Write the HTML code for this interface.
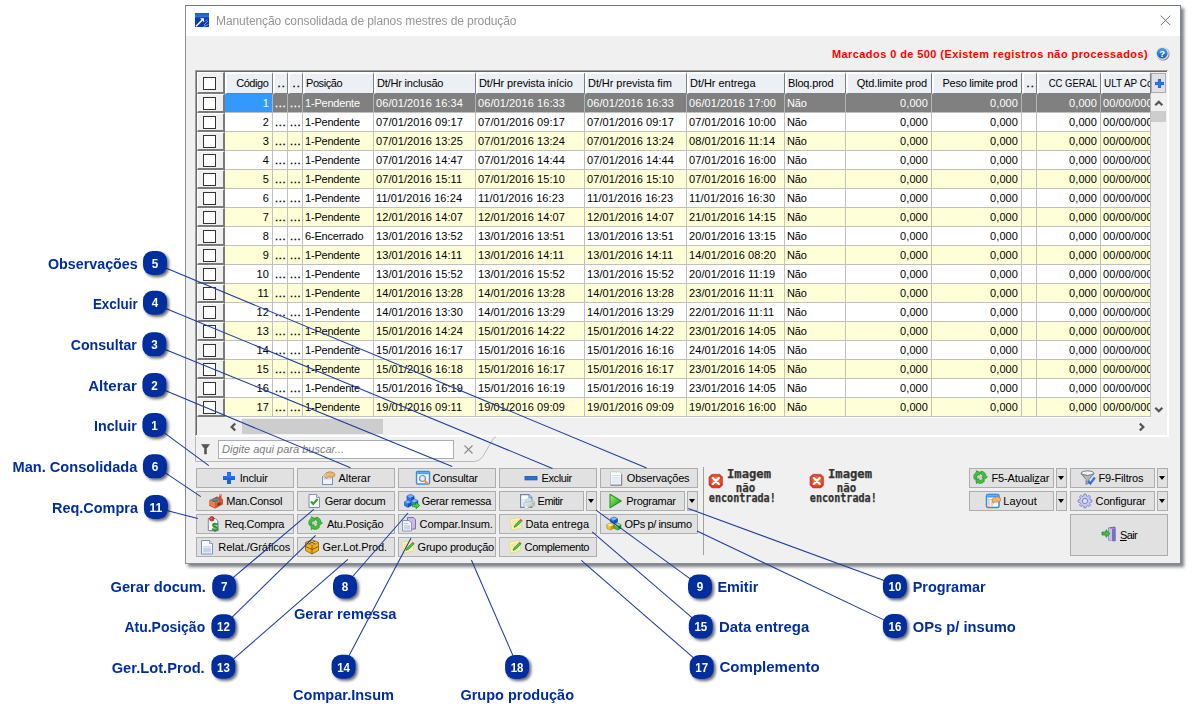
<!DOCTYPE html>
<html lang="pt-BR"><head><meta charset="utf-8"><title>Manutenção consolidada de planos mestres de produção</title>
<style>
html,body{margin:0;padding:0;background:#fff;}
body{width:1204px;height:721px;position:relative;overflow:hidden;font-family:"Liberation Sans",sans-serif;font-size:11px;color:#000;}
.abs,.abs *{position:absolute;box-sizing:border-box;}
#win{left:185px;top:5px;width:996px;height:559px;background:#f0f0f0;border:1px solid #6e7a8a;border-left-color:#8a9099;border-right-color:#80868f;border-bottom-color:#888c92;box-shadow:3px 3px 3px rgba(40,45,55,.6);}
#tbar{left:0;top:0;width:994px;height:30px;background:#fff;}
#title{left:30px;top:8px;font-size:12px;line-height:14px;color:#959595;white-space:nowrap;letter-spacing:-.085px;will-change:transform;}
.t{white-space:nowrap;line-height:13px;height:13px;letter-spacing:-.2px;}
.d{letter-spacing:.08px}
.t u{position:static;text-decoration:underline}
.dots{letter-spacing:.75px;-webkit-text-stroke:.35px currentColor}
#grid{left:195px;top:70px;width:974px;height:367px;background:#f0f0f0;border-left:1px solid #a0a0a0;border-top:1px solid #a0a0a0;border-right:2px solid #fff;border-bottom:2px solid #fff;box-shadow:inset 1px 1px 0 #696969;}
.hc{top:72px;height:22px;background:#eceff3;border-right:1px solid #7e7e7e;border-bottom:1px solid #7e7e7e;border-left:2px solid #fff;border-top:2px solid #fff;}
.hc .t{top:3px;}
.cell{height:19px;border-right:1px solid #c0c0c0;border-bottom:1px solid #c0c0c0;overflow:hidden;}
.cell .t{top:3px;}
.w{background:#fff}.y{background:#ffffd7}.s{background:#808080;color:#fff;border-color:#808080 #b4b4b4 #c0c0c0 #808080}
.ck{height:19px;background:#f0f0f0;border-right:2px solid #7a7a7a;border-bottom:2px solid #7a7a7a;border-left:1px solid #fff;border-top:1px solid #fff;}
.cb{left:5px;top:2px;width:13px;height:13px;background:#fff;border:1px solid #333;}
.btn{height:20px;background:#e1e1e1;border:1px solid #adadad;}
.btn .t{top:3px;}
.btn svg{top:1px}
.dd{width:11px;height:20px;background:#e1e1e1;border:1px solid #adadad;}
.dd:after{content:"";position:absolute;left:1px;top:7px;border:3.5px solid transparent;border-top:4px solid #000;border-bottom:0;}
</style></head><body>
<div class="abs" id="win">
<div id="tbar"></div>
<svg style="left:9px;top:7px" width="14" height="14" viewBox="0 0 14 14"><defs><linearGradient id="ag" x1="0" y1="0" x2="0" y2="1"><stop offset="0" stop-color="#1a54d0"/><stop offset=".28" stop-color="#3274e0"/><stop offset=".34" stop-color="#0a3aa8"/><stop offset="1" stop-color="#0a3cb0"/></linearGradient></defs><rect width="14" height="14" fill="url(#ag)"/><path d="M1 13.300 L7.500 6.800" stroke="#fff" stroke-width="1.500"/><path d="M5 5.200 L9 5.200 L9 9.200 Z" fill="#fff"/><path d="M10 8.500 l2.500 -2.500 M9 12 l4 -4 M8.500 13.500 l5 -2" stroke="#9ab8f0" stroke-width="1" opacity=".8"/></svg>
<div id="title">Manutenção consolidada de planos mestres de produção</div>
<svg style="left:973px;top:8px" width="13" height="13" viewBox="0 0 13 13"><path d="M1.5 1.5 L11.5 11.5 M11.5 1.5 L1.5 11.5" transform="translate(.4 .2) scale(.95)" stroke="#6a6a6a" stroke-width="1" fill="none"/></svg>
</div>

<div class="abs" id="page">
<div class="t" style="left:832px;top:48px;font-weight:bold;color:#ff0000;letter-spacing:0.414px">Marcados 0 de 500 (Existem registros não processados)</div>
<svg style="left:1154px;top:45px" width="17" height="17" viewBox="0 0 17 17"><defs><linearGradient id="hg" x1="0" y1="0" x2="0" y2="1"><stop offset="0" stop-color="#58a4f0"/><stop offset=".55" stop-color="#2e7cdc"/><stop offset="1" stop-color="#1858b8"/></linearGradient></defs><circle cx="9" cy="9" r="6.600" fill="#6a6a6a" opacity=".75"/><circle cx="8.200" cy="8.200" r="6.500" fill="#ece6de"/><circle cx="8.200" cy="8.200" r="5.400" fill="url(#hg)"/><text x="8.200" y="11.600" font-size="9.500" font-weight="bold" fill="#fff" text-anchor="middle" font-family="Liberation Sans, sans-serif">?</text></svg>
<div id="grid"></div>
<div class="hc" style="left:197px;width:28px;border-left-width:1px;border-top-width:1px;border-right:2px solid #7a7a7a;border-bottom:2px solid #7a7a7a;background:#f0f0f0"><div class="cb" style="left:5px;top:4px"></div></div>
<div class="hc" style="left:225px;width:48px"><div class="t" style="right:3.57px;letter-spacing:-0.427px">Código</div></div>
<div class="hc" style="left:273px;width:15px;overflow:hidden"><div class="t" style="left:1px;letter-spacing:0.900px;-webkit-text-stroke:.35px #000;left:2.500px;letter-spacing:1.300px">...</div></div>
<div class="hc" style="left:288px;width:15px;overflow:hidden"><div class="t" style="left:1px;letter-spacing:0.900px;-webkit-text-stroke:.35px #000;left:2.500px;letter-spacing:1.300px">...</div></div>
<div class="hc" style="left:303px;width:71px;overflow:hidden"><div class="t" style="left:1px;letter-spacing:-0.419px;">Posição</div></div>
<div class="hc" style="left:374px;width:102px;overflow:hidden"><div class="t" style="left:1px;letter-spacing:-0.199px;">Dt/Hr inclusão</div></div>
<div class="hc" style="left:476px;width:109px;overflow:hidden"><div class="t" style="left:1px;letter-spacing:-0.108px;">Dt/Hr prevista início</div></div>
<div class="hc" style="left:585px;width:102px;overflow:hidden"><div class="t" style="left:1px;letter-spacing:-0.064px;">Dt/Hr prevista fim</div></div>
<div class="hc" style="left:687px;width:98px;overflow:hidden"><div class="t" style="left:1px;letter-spacing:-0.041px;">Dt/Hr entrega</div></div>
<div class="hc" style="left:785px;width:61px;overflow:hidden"><div class="t" style="left:1px;letter-spacing:-0.177px;">Bloq.prod</div></div>
<div class="hc" style="left:846px;width:86px"><div class="t" style="right:3.92px;letter-spacing:-0.082px">Qtd.limite prod</div></div>
<div class="hc" style="left:932px;width:90px"><div class="t" style="right:3.75px;letter-spacing:-0.254px">Peso limite prod</div></div>
<div class="hc" style="left:1022px;width:15px;overflow:hidden"><div class="t" style="left:1px;letter-spacing:0.900px;-webkit-text-stroke:.35px #000;left:2.500px;letter-spacing:1.300px">...</div></div>
<div class="hc" style="left:1037px;width:64px"><div class="t" style="right:3px;letter-spacing:0;transform:scaleX(.862);transform-origin:100% 50%">CC GERAL</div></div>
<div class="hc" style="left:1101px;width:50px;overflow:hidden"><div class="t" style="left:1px;letter-spacing:0;transform:scaleX(.9);transform-origin:0 50%">ULT AP Co</div></div>
<div style="left:1151px;top:72px;width:16px;height:22px;background:#f0f0f0"></div>
<div class="btn" style="left:1151px;top:73px;width:15px;height:20px"><svg style="left:3px;top:5px" width="9" height="9" viewBox="0 0 9 9"><path d="M3 0h3v3h3v3h-3v3h-3v-3h-3v-3h3z" fill="#2a78e4"/><path d="M3.400 .4h2.200v3h3v2.200h-3v3h-2.200v-3h-3v-2.200h3z" fill="none" stroke="#1858c0" stroke-width=".6" opacity=".7"/></svg></div>
<div class="ck" style="left:197px;top:94px;width:28px"><div class="cb"></div></div>
<div class="cell s" style="left:225px;top:94px;width:48px;background:#3399ff;border-color:#3399ff #b4b4b4 #c0c0c0 #3399ff;"><div class="t d" style="right:3px">1</div></div>
<div class="cell s" style="left:273px;top:94px;width:15px;"><div class="t dots" style="left:2px">...</div></div>
<div class="cell s" style="left:288px;top:94px;width:15px;"><div class="t dots" style="left:2px">...</div></div>
<div class="cell s" style="left:303px;top:94px;width:71px;"><div class="t" style="left:2px">1-Pendente</div></div>
<div class="cell s" style="left:374px;top:94px;width:102px;"><div class="t d" style="left:2px">06/01/2016 16:34</div></div>
<div class="cell s" style="left:476px;top:94px;width:109px;"><div class="t d" style="left:2px">06/01/2016 16:33</div></div>
<div class="cell s" style="left:585px;top:94px;width:102px;"><div class="t d" style="left:2px">06/01/2016 16:33</div></div>
<div class="cell s" style="left:687px;top:94px;width:98px;"><div class="t d" style="left:2px">06/01/2016 17:00</div></div>
<div class="cell s" style="left:785px;top:94px;width:61px;"><div class="t" style="left:2px">Não</div></div>
<div class="cell s" style="left:846px;top:94px;width:86px;"><div class="t d" style="right:3px">0,000</div></div>
<div class="cell s" style="left:932px;top:94px;width:90px;"><div class="t d" style="right:3px">0,000</div></div>
<div class="cell s" style="left:1022px;top:94px;width:15px;"><div class="t" style="left:2px"></div></div>
<div class="cell s" style="left:1037px;top:94px;width:64px;"><div class="t d" style="right:3px">0,000</div></div>
<div class="cell s" style="left:1101px;top:94px;width:50px;"><div class="t d" style="left:2px">00/00/0000</div></div>
<div class="ck" style="left:197px;top:113px;width:28px"><div class="cb"></div></div>
<div class="cell w" style="left:225px;top:113px;width:48px;"><div class="t d" style="right:3px">2</div></div>
<div class="cell w" style="left:273px;top:113px;width:15px;"><div class="t dots" style="left:2px">...</div></div>
<div class="cell w" style="left:288px;top:113px;width:15px;"><div class="t dots" style="left:2px">...</div></div>
<div class="cell w" style="left:303px;top:113px;width:71px;"><div class="t" style="left:2px">1-Pendente</div></div>
<div class="cell w" style="left:374px;top:113px;width:102px;"><div class="t d" style="left:2px">07/01/2016 09:17</div></div>
<div class="cell w" style="left:476px;top:113px;width:109px;"><div class="t d" style="left:2px">07/01/2016 09:17</div></div>
<div class="cell w" style="left:585px;top:113px;width:102px;"><div class="t d" style="left:2px">07/01/2016 09:17</div></div>
<div class="cell w" style="left:687px;top:113px;width:98px;"><div class="t d" style="left:2px">07/01/2016 10:00</div></div>
<div class="cell w" style="left:785px;top:113px;width:61px;"><div class="t" style="left:2px">Não</div></div>
<div class="cell w" style="left:846px;top:113px;width:86px;"><div class="t d" style="right:3px">0,000</div></div>
<div class="cell w" style="left:932px;top:113px;width:90px;"><div class="t d" style="right:3px">0,000</div></div>
<div class="cell w" style="left:1022px;top:113px;width:15px;"><div class="t" style="left:2px"></div></div>
<div class="cell w" style="left:1037px;top:113px;width:64px;"><div class="t d" style="right:3px">0,000</div></div>
<div class="cell w" style="left:1101px;top:113px;width:50px;"><div class="t d" style="left:2px">00/00/0000</div></div>
<div class="ck" style="left:197px;top:132px;width:28px"><div class="cb"></div></div>
<div class="cell y" style="left:225px;top:132px;width:48px;"><div class="t d" style="right:3px">3</div></div>
<div class="cell y" style="left:273px;top:132px;width:15px;"><div class="t dots" style="left:2px">...</div></div>
<div class="cell y" style="left:288px;top:132px;width:15px;"><div class="t dots" style="left:2px">...</div></div>
<div class="cell y" style="left:303px;top:132px;width:71px;"><div class="t" style="left:2px">1-Pendente</div></div>
<div class="cell y" style="left:374px;top:132px;width:102px;"><div class="t d" style="left:2px">07/01/2016 13:25</div></div>
<div class="cell y" style="left:476px;top:132px;width:109px;"><div class="t d" style="left:2px">07/01/2016 13:24</div></div>
<div class="cell y" style="left:585px;top:132px;width:102px;"><div class="t d" style="left:2px">07/01/2016 13:24</div></div>
<div class="cell y" style="left:687px;top:132px;width:98px;"><div class="t d" style="left:2px">08/01/2016 11:14</div></div>
<div class="cell y" style="left:785px;top:132px;width:61px;"><div class="t" style="left:2px">Não</div></div>
<div class="cell y" style="left:846px;top:132px;width:86px;"><div class="t d" style="right:3px">0,000</div></div>
<div class="cell y" style="left:932px;top:132px;width:90px;"><div class="t d" style="right:3px">0,000</div></div>
<div class="cell y" style="left:1022px;top:132px;width:15px;"><div class="t" style="left:2px"></div></div>
<div class="cell y" style="left:1037px;top:132px;width:64px;"><div class="t d" style="right:3px">0,000</div></div>
<div class="cell y" style="left:1101px;top:132px;width:50px;"><div class="t d" style="left:2px">00/00/0000</div></div>
<div class="ck" style="left:197px;top:151px;width:28px"><div class="cb"></div></div>
<div class="cell w" style="left:225px;top:151px;width:48px;"><div class="t d" style="right:3px">4</div></div>
<div class="cell w" style="left:273px;top:151px;width:15px;"><div class="t dots" style="left:2px">...</div></div>
<div class="cell w" style="left:288px;top:151px;width:15px;"><div class="t dots" style="left:2px">...</div></div>
<div class="cell w" style="left:303px;top:151px;width:71px;"><div class="t" style="left:2px">1-Pendente</div></div>
<div class="cell w" style="left:374px;top:151px;width:102px;"><div class="t d" style="left:2px">07/01/2016 14:47</div></div>
<div class="cell w" style="left:476px;top:151px;width:109px;"><div class="t d" style="left:2px">07/01/2016 14:44</div></div>
<div class="cell w" style="left:585px;top:151px;width:102px;"><div class="t d" style="left:2px">07/01/2016 14:44</div></div>
<div class="cell w" style="left:687px;top:151px;width:98px;"><div class="t d" style="left:2px">07/01/2016 16:00</div></div>
<div class="cell w" style="left:785px;top:151px;width:61px;"><div class="t" style="left:2px">Não</div></div>
<div class="cell w" style="left:846px;top:151px;width:86px;"><div class="t d" style="right:3px">0,000</div></div>
<div class="cell w" style="left:932px;top:151px;width:90px;"><div class="t d" style="right:3px">0,000</div></div>
<div class="cell w" style="left:1022px;top:151px;width:15px;"><div class="t" style="left:2px"></div></div>
<div class="cell w" style="left:1037px;top:151px;width:64px;"><div class="t d" style="right:3px">0,000</div></div>
<div class="cell w" style="left:1101px;top:151px;width:50px;"><div class="t d" style="left:2px">00/00/0000</div></div>
<div class="ck" style="left:197px;top:170px;width:28px"><div class="cb"></div></div>
<div class="cell y" style="left:225px;top:170px;width:48px;"><div class="t d" style="right:3px">5</div></div>
<div class="cell y" style="left:273px;top:170px;width:15px;"><div class="t dots" style="left:2px">...</div></div>
<div class="cell y" style="left:288px;top:170px;width:15px;"><div class="t dots" style="left:2px">...</div></div>
<div class="cell y" style="left:303px;top:170px;width:71px;"><div class="t" style="left:2px">1-Pendente</div></div>
<div class="cell y" style="left:374px;top:170px;width:102px;"><div class="t d" style="left:2px">07/01/2016 15:11</div></div>
<div class="cell y" style="left:476px;top:170px;width:109px;"><div class="t d" style="left:2px">07/01/2016 15:10</div></div>
<div class="cell y" style="left:585px;top:170px;width:102px;"><div class="t d" style="left:2px">07/01/2016 15:10</div></div>
<div class="cell y" style="left:687px;top:170px;width:98px;"><div class="t d" style="left:2px">07/01/2016 16:00</div></div>
<div class="cell y" style="left:785px;top:170px;width:61px;"><div class="t" style="left:2px">Não</div></div>
<div class="cell y" style="left:846px;top:170px;width:86px;"><div class="t d" style="right:3px">0,000</div></div>
<div class="cell y" style="left:932px;top:170px;width:90px;"><div class="t d" style="right:3px">0,000</div></div>
<div class="cell y" style="left:1022px;top:170px;width:15px;"><div class="t" style="left:2px"></div></div>
<div class="cell y" style="left:1037px;top:170px;width:64px;"><div class="t d" style="right:3px">0,000</div></div>
<div class="cell y" style="left:1101px;top:170px;width:50px;"><div class="t d" style="left:2px">00/00/0000</div></div>
<div class="ck" style="left:197px;top:189px;width:28px"><div class="cb"></div></div>
<div class="cell w" style="left:225px;top:189px;width:48px;"><div class="t d" style="right:3px">6</div></div>
<div class="cell w" style="left:273px;top:189px;width:15px;"><div class="t dots" style="left:2px">...</div></div>
<div class="cell w" style="left:288px;top:189px;width:15px;"><div class="t dots" style="left:2px">...</div></div>
<div class="cell w" style="left:303px;top:189px;width:71px;"><div class="t" style="left:2px">1-Pendente</div></div>
<div class="cell w" style="left:374px;top:189px;width:102px;"><div class="t d" style="left:2px">11/01/2016 16:24</div></div>
<div class="cell w" style="left:476px;top:189px;width:109px;"><div class="t d" style="left:2px">11/01/2016 16:23</div></div>
<div class="cell w" style="left:585px;top:189px;width:102px;"><div class="t d" style="left:2px">11/01/2016 16:23</div></div>
<div class="cell w" style="left:687px;top:189px;width:98px;"><div class="t d" style="left:2px">11/01/2016 16:30</div></div>
<div class="cell w" style="left:785px;top:189px;width:61px;"><div class="t" style="left:2px">Não</div></div>
<div class="cell w" style="left:846px;top:189px;width:86px;"><div class="t d" style="right:3px">0,000</div></div>
<div class="cell w" style="left:932px;top:189px;width:90px;"><div class="t d" style="right:3px">0,000</div></div>
<div class="cell w" style="left:1022px;top:189px;width:15px;"><div class="t" style="left:2px"></div></div>
<div class="cell w" style="left:1037px;top:189px;width:64px;"><div class="t d" style="right:3px">0,000</div></div>
<div class="cell w" style="left:1101px;top:189px;width:50px;"><div class="t d" style="left:2px">00/00/0000</div></div>
<div class="ck" style="left:197px;top:208px;width:28px"><div class="cb"></div></div>
<div class="cell y" style="left:225px;top:208px;width:48px;"><div class="t d" style="right:3px">7</div></div>
<div class="cell y" style="left:273px;top:208px;width:15px;"><div class="t dots" style="left:2px">...</div></div>
<div class="cell y" style="left:288px;top:208px;width:15px;"><div class="t dots" style="left:2px">...</div></div>
<div class="cell y" style="left:303px;top:208px;width:71px;"><div class="t" style="left:2px">1-Pendente</div></div>
<div class="cell y" style="left:374px;top:208px;width:102px;"><div class="t d" style="left:2px">12/01/2016 14:07</div></div>
<div class="cell y" style="left:476px;top:208px;width:109px;"><div class="t d" style="left:2px">12/01/2016 14:07</div></div>
<div class="cell y" style="left:585px;top:208px;width:102px;"><div class="t d" style="left:2px">12/01/2016 14:07</div></div>
<div class="cell y" style="left:687px;top:208px;width:98px;"><div class="t d" style="left:2px">21/01/2016 14:15</div></div>
<div class="cell y" style="left:785px;top:208px;width:61px;"><div class="t" style="left:2px">Não</div></div>
<div class="cell y" style="left:846px;top:208px;width:86px;"><div class="t d" style="right:3px">0,000</div></div>
<div class="cell y" style="left:932px;top:208px;width:90px;"><div class="t d" style="right:3px">0,000</div></div>
<div class="cell y" style="left:1022px;top:208px;width:15px;"><div class="t" style="left:2px"></div></div>
<div class="cell y" style="left:1037px;top:208px;width:64px;"><div class="t d" style="right:3px">0,000</div></div>
<div class="cell y" style="left:1101px;top:208px;width:50px;"><div class="t d" style="left:2px">00/00/0000</div></div>
<div class="ck" style="left:197px;top:227px;width:28px"><div class="cb"></div></div>
<div class="cell w" style="left:225px;top:227px;width:48px;"><div class="t d" style="right:3px">8</div></div>
<div class="cell w" style="left:273px;top:227px;width:15px;"><div class="t dots" style="left:2px">...</div></div>
<div class="cell w" style="left:288px;top:227px;width:15px;"><div class="t dots" style="left:2px">...</div></div>
<div class="cell w" style="left:303px;top:227px;width:71px;"><div class="t" style="left:2px">6-Encerrado</div></div>
<div class="cell w" style="left:374px;top:227px;width:102px;"><div class="t d" style="left:2px">13/01/2016 13:52</div></div>
<div class="cell w" style="left:476px;top:227px;width:109px;"><div class="t d" style="left:2px">13/01/2016 13:51</div></div>
<div class="cell w" style="left:585px;top:227px;width:102px;"><div class="t d" style="left:2px">13/01/2016 13:51</div></div>
<div class="cell w" style="left:687px;top:227px;width:98px;"><div class="t d" style="left:2px">20/01/2016 13:15</div></div>
<div class="cell w" style="left:785px;top:227px;width:61px;"><div class="t" style="left:2px">Não</div></div>
<div class="cell w" style="left:846px;top:227px;width:86px;"><div class="t d" style="right:3px">0,000</div></div>
<div class="cell w" style="left:932px;top:227px;width:90px;"><div class="t d" style="right:3px">0,000</div></div>
<div class="cell w" style="left:1022px;top:227px;width:15px;"><div class="t" style="left:2px"></div></div>
<div class="cell w" style="left:1037px;top:227px;width:64px;"><div class="t d" style="right:3px">0,000</div></div>
<div class="cell w" style="left:1101px;top:227px;width:50px;"><div class="t d" style="left:2px">00/00/0000</div></div>
<div class="ck" style="left:197px;top:246px;width:28px"><div class="cb"></div></div>
<div class="cell y" style="left:225px;top:246px;width:48px;"><div class="t d" style="right:3px">9</div></div>
<div class="cell y" style="left:273px;top:246px;width:15px;"><div class="t dots" style="left:2px">...</div></div>
<div class="cell y" style="left:288px;top:246px;width:15px;"><div class="t dots" style="left:2px">...</div></div>
<div class="cell y" style="left:303px;top:246px;width:71px;"><div class="t" style="left:2px">1-Pendente</div></div>
<div class="cell y" style="left:374px;top:246px;width:102px;"><div class="t d" style="left:2px">13/01/2016 14:11</div></div>
<div class="cell y" style="left:476px;top:246px;width:109px;"><div class="t d" style="left:2px">13/01/2016 14:11</div></div>
<div class="cell y" style="left:585px;top:246px;width:102px;"><div class="t d" style="left:2px">13/01/2016 14:11</div></div>
<div class="cell y" style="left:687px;top:246px;width:98px;"><div class="t d" style="left:2px">14/01/2016 08:20</div></div>
<div class="cell y" style="left:785px;top:246px;width:61px;"><div class="t" style="left:2px">Não</div></div>
<div class="cell y" style="left:846px;top:246px;width:86px;"><div class="t d" style="right:3px">0,000</div></div>
<div class="cell y" style="left:932px;top:246px;width:90px;"><div class="t d" style="right:3px">0,000</div></div>
<div class="cell y" style="left:1022px;top:246px;width:15px;"><div class="t" style="left:2px"></div></div>
<div class="cell y" style="left:1037px;top:246px;width:64px;"><div class="t d" style="right:3px">0,000</div></div>
<div class="cell y" style="left:1101px;top:246px;width:50px;"><div class="t d" style="left:2px">00/00/0000</div></div>
<div class="ck" style="left:197px;top:265px;width:28px"><div class="cb"></div></div>
<div class="cell w" style="left:225px;top:265px;width:48px;"><div class="t d" style="right:3px">10</div></div>
<div class="cell w" style="left:273px;top:265px;width:15px;"><div class="t dots" style="left:2px">...</div></div>
<div class="cell w" style="left:288px;top:265px;width:15px;"><div class="t dots" style="left:2px">...</div></div>
<div class="cell w" style="left:303px;top:265px;width:71px;"><div class="t" style="left:2px">1-Pendente</div></div>
<div class="cell w" style="left:374px;top:265px;width:102px;"><div class="t d" style="left:2px">13/01/2016 15:52</div></div>
<div class="cell w" style="left:476px;top:265px;width:109px;"><div class="t d" style="left:2px">13/01/2016 15:52</div></div>
<div class="cell w" style="left:585px;top:265px;width:102px;"><div class="t d" style="left:2px">13/01/2016 15:52</div></div>
<div class="cell w" style="left:687px;top:265px;width:98px;"><div class="t d" style="left:2px">20/01/2016 11:19</div></div>
<div class="cell w" style="left:785px;top:265px;width:61px;"><div class="t" style="left:2px">Não</div></div>
<div class="cell w" style="left:846px;top:265px;width:86px;"><div class="t d" style="right:3px">0,000</div></div>
<div class="cell w" style="left:932px;top:265px;width:90px;"><div class="t d" style="right:3px">0,000</div></div>
<div class="cell w" style="left:1022px;top:265px;width:15px;"><div class="t" style="left:2px"></div></div>
<div class="cell w" style="left:1037px;top:265px;width:64px;"><div class="t d" style="right:3px">0,000</div></div>
<div class="cell w" style="left:1101px;top:265px;width:50px;"><div class="t d" style="left:2px">00/00/0000</div></div>
<div class="ck" style="left:197px;top:284px;width:28px"><div class="cb"></div></div>
<div class="cell y" style="left:225px;top:284px;width:48px;"><div class="t d" style="right:3px">11</div></div>
<div class="cell y" style="left:273px;top:284px;width:15px;"><div class="t dots" style="left:2px">...</div></div>
<div class="cell y" style="left:288px;top:284px;width:15px;"><div class="t dots" style="left:2px">...</div></div>
<div class="cell y" style="left:303px;top:284px;width:71px;"><div class="t" style="left:2px">1-Pendente</div></div>
<div class="cell y" style="left:374px;top:284px;width:102px;"><div class="t d" style="left:2px">14/01/2016 13:28</div></div>
<div class="cell y" style="left:476px;top:284px;width:109px;"><div class="t d" style="left:2px">14/01/2016 13:28</div></div>
<div class="cell y" style="left:585px;top:284px;width:102px;"><div class="t d" style="left:2px">14/01/2016 13:28</div></div>
<div class="cell y" style="left:687px;top:284px;width:98px;"><div class="t d" style="left:2px">23/01/2016 11:11</div></div>
<div class="cell y" style="left:785px;top:284px;width:61px;"><div class="t" style="left:2px">Não</div></div>
<div class="cell y" style="left:846px;top:284px;width:86px;"><div class="t d" style="right:3px">0,000</div></div>
<div class="cell y" style="left:932px;top:284px;width:90px;"><div class="t d" style="right:3px">0,000</div></div>
<div class="cell y" style="left:1022px;top:284px;width:15px;"><div class="t" style="left:2px"></div></div>
<div class="cell y" style="left:1037px;top:284px;width:64px;"><div class="t d" style="right:3px">0,000</div></div>
<div class="cell y" style="left:1101px;top:284px;width:50px;"><div class="t d" style="left:2px">00/00/0000</div></div>
<div class="ck" style="left:197px;top:303px;width:28px"><div class="cb"></div></div>
<div class="cell w" style="left:225px;top:303px;width:48px;"><div class="t d" style="right:3px">12</div></div>
<div class="cell w" style="left:273px;top:303px;width:15px;"><div class="t dots" style="left:2px">...</div></div>
<div class="cell w" style="left:288px;top:303px;width:15px;"><div class="t dots" style="left:2px">...</div></div>
<div class="cell w" style="left:303px;top:303px;width:71px;"><div class="t" style="left:2px">1-Pendente</div></div>
<div class="cell w" style="left:374px;top:303px;width:102px;"><div class="t d" style="left:2px">14/01/2016 13:30</div></div>
<div class="cell w" style="left:476px;top:303px;width:109px;"><div class="t d" style="left:2px">14/01/2016 13:29</div></div>
<div class="cell w" style="left:585px;top:303px;width:102px;"><div class="t d" style="left:2px">14/01/2016 13:29</div></div>
<div class="cell w" style="left:687px;top:303px;width:98px;"><div class="t d" style="left:2px">22/01/2016 11:11</div></div>
<div class="cell w" style="left:785px;top:303px;width:61px;"><div class="t" style="left:2px">Não</div></div>
<div class="cell w" style="left:846px;top:303px;width:86px;"><div class="t d" style="right:3px">0,000</div></div>
<div class="cell w" style="left:932px;top:303px;width:90px;"><div class="t d" style="right:3px">0,000</div></div>
<div class="cell w" style="left:1022px;top:303px;width:15px;"><div class="t" style="left:2px"></div></div>
<div class="cell w" style="left:1037px;top:303px;width:64px;"><div class="t d" style="right:3px">0,000</div></div>
<div class="cell w" style="left:1101px;top:303px;width:50px;"><div class="t d" style="left:2px">00/00/0000</div></div>
<div class="ck" style="left:197px;top:322px;width:28px"><div class="cb"></div></div>
<div class="cell y" style="left:225px;top:322px;width:48px;"><div class="t d" style="right:3px">13</div></div>
<div class="cell y" style="left:273px;top:322px;width:15px;"><div class="t dots" style="left:2px">...</div></div>
<div class="cell y" style="left:288px;top:322px;width:15px;"><div class="t dots" style="left:2px">...</div></div>
<div class="cell y" style="left:303px;top:322px;width:71px;"><div class="t" style="left:2px">1-Pendente</div></div>
<div class="cell y" style="left:374px;top:322px;width:102px;"><div class="t d" style="left:2px">15/01/2016 14:24</div></div>
<div class="cell y" style="left:476px;top:322px;width:109px;"><div class="t d" style="left:2px">15/01/2016 14:22</div></div>
<div class="cell y" style="left:585px;top:322px;width:102px;"><div class="t d" style="left:2px">15/01/2016 14:22</div></div>
<div class="cell y" style="left:687px;top:322px;width:98px;"><div class="t d" style="left:2px">23/01/2016 14:05</div></div>
<div class="cell y" style="left:785px;top:322px;width:61px;"><div class="t" style="left:2px">Não</div></div>
<div class="cell y" style="left:846px;top:322px;width:86px;"><div class="t d" style="right:3px">0,000</div></div>
<div class="cell y" style="left:932px;top:322px;width:90px;"><div class="t d" style="right:3px">0,000</div></div>
<div class="cell y" style="left:1022px;top:322px;width:15px;"><div class="t" style="left:2px"></div></div>
<div class="cell y" style="left:1037px;top:322px;width:64px;"><div class="t d" style="right:3px">0,000</div></div>
<div class="cell y" style="left:1101px;top:322px;width:50px;"><div class="t d" style="left:2px">00/00/0000</div></div>
<div class="ck" style="left:197px;top:341px;width:28px"><div class="cb"></div></div>
<div class="cell w" style="left:225px;top:341px;width:48px;"><div class="t d" style="right:3px">14</div></div>
<div class="cell w" style="left:273px;top:341px;width:15px;"><div class="t dots" style="left:2px">...</div></div>
<div class="cell w" style="left:288px;top:341px;width:15px;"><div class="t dots" style="left:2px">...</div></div>
<div class="cell w" style="left:303px;top:341px;width:71px;"><div class="t" style="left:2px">1-Pendente</div></div>
<div class="cell w" style="left:374px;top:341px;width:102px;"><div class="t d" style="left:2px">15/01/2016 16:17</div></div>
<div class="cell w" style="left:476px;top:341px;width:109px;"><div class="t d" style="left:2px">15/01/2016 16:16</div></div>
<div class="cell w" style="left:585px;top:341px;width:102px;"><div class="t d" style="left:2px">15/01/2016 16:16</div></div>
<div class="cell w" style="left:687px;top:341px;width:98px;"><div class="t d" style="left:2px">24/01/2016 14:05</div></div>
<div class="cell w" style="left:785px;top:341px;width:61px;"><div class="t" style="left:2px">Não</div></div>
<div class="cell w" style="left:846px;top:341px;width:86px;"><div class="t d" style="right:3px">0,000</div></div>
<div class="cell w" style="left:932px;top:341px;width:90px;"><div class="t d" style="right:3px">0,000</div></div>
<div class="cell w" style="left:1022px;top:341px;width:15px;"><div class="t" style="left:2px"></div></div>
<div class="cell w" style="left:1037px;top:341px;width:64px;"><div class="t d" style="right:3px">0,000</div></div>
<div class="cell w" style="left:1101px;top:341px;width:50px;"><div class="t d" style="left:2px">00/00/0000</div></div>
<div class="ck" style="left:197px;top:360px;width:28px"><div class="cb"></div></div>
<div class="cell y" style="left:225px;top:360px;width:48px;"><div class="t d" style="right:3px">15</div></div>
<div class="cell y" style="left:273px;top:360px;width:15px;"><div class="t dots" style="left:2px">...</div></div>
<div class="cell y" style="left:288px;top:360px;width:15px;"><div class="t dots" style="left:2px">...</div></div>
<div class="cell y" style="left:303px;top:360px;width:71px;"><div class="t" style="left:2px">1-Pendente</div></div>
<div class="cell y" style="left:374px;top:360px;width:102px;"><div class="t d" style="left:2px">15/01/2016 16:18</div></div>
<div class="cell y" style="left:476px;top:360px;width:109px;"><div class="t d" style="left:2px">15/01/2016 16:17</div></div>
<div class="cell y" style="left:585px;top:360px;width:102px;"><div class="t d" style="left:2px">15/01/2016 16:17</div></div>
<div class="cell y" style="left:687px;top:360px;width:98px;"><div class="t d" style="left:2px">23/01/2016 14:05</div></div>
<div class="cell y" style="left:785px;top:360px;width:61px;"><div class="t" style="left:2px">Não</div></div>
<div class="cell y" style="left:846px;top:360px;width:86px;"><div class="t d" style="right:3px">0,000</div></div>
<div class="cell y" style="left:932px;top:360px;width:90px;"><div class="t d" style="right:3px">0,000</div></div>
<div class="cell y" style="left:1022px;top:360px;width:15px;"><div class="t" style="left:2px"></div></div>
<div class="cell y" style="left:1037px;top:360px;width:64px;"><div class="t d" style="right:3px">0,000</div></div>
<div class="cell y" style="left:1101px;top:360px;width:50px;"><div class="t d" style="left:2px">00/00/0000</div></div>
<div class="ck" style="left:197px;top:379px;width:28px"><div class="cb"></div></div>
<div class="cell w" style="left:225px;top:379px;width:48px;"><div class="t d" style="right:3px">16</div></div>
<div class="cell w" style="left:273px;top:379px;width:15px;"><div class="t dots" style="left:2px">...</div></div>
<div class="cell w" style="left:288px;top:379px;width:15px;"><div class="t dots" style="left:2px">...</div></div>
<div class="cell w" style="left:303px;top:379px;width:71px;"><div class="t" style="left:2px">1-Pendente</div></div>
<div class="cell w" style="left:374px;top:379px;width:102px;"><div class="t d" style="left:2px">15/01/2016 16:19</div></div>
<div class="cell w" style="left:476px;top:379px;width:109px;"><div class="t d" style="left:2px">15/01/2016 16:19</div></div>
<div class="cell w" style="left:585px;top:379px;width:102px;"><div class="t d" style="left:2px">15/01/2016 16:19</div></div>
<div class="cell w" style="left:687px;top:379px;width:98px;"><div class="t d" style="left:2px">23/01/2016 14:05</div></div>
<div class="cell w" style="left:785px;top:379px;width:61px;"><div class="t" style="left:2px">Não</div></div>
<div class="cell w" style="left:846px;top:379px;width:86px;"><div class="t d" style="right:3px">0,000</div></div>
<div class="cell w" style="left:932px;top:379px;width:90px;"><div class="t d" style="right:3px">0,000</div></div>
<div class="cell w" style="left:1022px;top:379px;width:15px;"><div class="t" style="left:2px"></div></div>
<div class="cell w" style="left:1037px;top:379px;width:64px;"><div class="t d" style="right:3px">0,000</div></div>
<div class="cell w" style="left:1101px;top:379px;width:50px;"><div class="t d" style="left:2px">00/00/0000</div></div>
<div class="ck" style="left:197px;top:398px;width:28px"><div class="cb"></div></div>
<div class="cell y" style="left:225px;top:398px;width:48px;"><div class="t d" style="right:3px">17</div></div>
<div class="cell y" style="left:273px;top:398px;width:15px;"><div class="t dots" style="left:2px">...</div></div>
<div class="cell y" style="left:288px;top:398px;width:15px;"><div class="t dots" style="left:2px">...</div></div>
<div class="cell y" style="left:303px;top:398px;width:71px;"><div class="t" style="left:2px">1-Pendente</div></div>
<div class="cell y" style="left:374px;top:398px;width:102px;"><div class="t d" style="left:2px">19/01/2016 09:11</div></div>
<div class="cell y" style="left:476px;top:398px;width:109px;"><div class="t d" style="left:2px">19/01/2016 09:09</div></div>
<div class="cell y" style="left:585px;top:398px;width:102px;"><div class="t d" style="left:2px">19/01/2016 09:09</div></div>
<div class="cell y" style="left:687px;top:398px;width:98px;"><div class="t d" style="left:2px">19/01/2016 16:00</div></div>
<div class="cell y" style="left:785px;top:398px;width:61px;"><div class="t" style="left:2px">Não</div></div>
<div class="cell y" style="left:846px;top:398px;width:86px;"><div class="t d" style="right:3px">0,000</div></div>
<div class="cell y" style="left:932px;top:398px;width:90px;"><div class="t d" style="right:3px">0,000</div></div>
<div class="cell y" style="left:1022px;top:398px;width:15px;"><div class="t" style="left:2px"></div></div>
<div class="cell y" style="left:1037px;top:398px;width:64px;"><div class="t d" style="right:3px">0,000</div></div>
<div class="cell y" style="left:1101px;top:398px;width:50px;"><div class="t d" style="left:2px">00/00/0000</div></div>
<div style="left:225px;top:417px;width:926px;height:1px;background:#fff"></div>
<div style="left:1151px;top:94px;width:16px;height:323px;background:#f0f0f0"></div>
<div style="left:1151px;top:111px;width:15px;height:11px;background:#cdcdcd"></div>
<svg style="left:1153px;top:98px" width="12" height="10" viewBox="0 0 12 10"><path d="M2.300 7.300 L5.800 3.800 L9.300 7.300" stroke="#555" stroke-width="2.300" fill="none"/></svg>
<svg style="left:1153px;top:405px" width="12" height="10" viewBox="0 0 12 10"><path d="M2.300 2.700 L5.800 6.200 L9.300 2.700" stroke="#555" stroke-width="2.300" fill="none"/></svg>
<div style="left:242px;top:419px;width:141px;height:15px;background:#cdcdcd"></div>
<svg style="left:228px;top:420.5px" width="10" height="12" viewBox="0 0 10 12"><path d="M7.200 2.500 L3.700 6 L7.200 9.500" stroke="#555" stroke-width="2.300" fill="none"/></svg>
<svg style="left:1137px;top:420.5px" width="10" height="12" viewBox="0 0 10 12"><path d="M2.800 2.500 L6.300 6 L2.800 9.500" stroke="#555" stroke-width="2.300" fill="none"/></svg>
<svg style="left:190px;top:432px" width="320" height="36" viewBox="0 0 320 36"><path d="M5.5 5 V29.5 H283 C 291 29.5 293 24 296 19 L 303 7 Q 304.5 5.2 306 5" fill="none" stroke="#b9b9b9" stroke-width="1"/><path d="M11.5 12.5 h8 l-3 4 v5.5 h-2 v-5.5 z" fill="#555" stroke="#555" stroke-width=".6"/><path d="M274.500 13.5 l8 8 m0 -8 l-8 8" stroke="#8a8a8a" stroke-width="1.1" fill="none"/></svg>
<div style="left:218px;top:440px;width:236px;height:19px;background:#fff;border:1px solid #a9adb8"></div>
<div class="t" style="left:222px;top:443px;font-style:italic;color:#7b7b7b;letter-spacing:0.004px">Digite aqui para buscar...</div>
</div>
<div class="abs" id="btns">
<div class="btn" style="left:196px;top:468px;width:98px;height:20px"><svg style="left:24px;top:1px" width="16" height="16" viewBox="0 0 16 16"><path d="M6 2h4v4h4v4h-4v4h-4v-4h-4v-4h4z" fill="#1464e4"/><path d="M6.500 2.500h3v4h4v1.300h-11v-1.300h4z" fill="#3f8af4" opacity=".55"/></svg><div class="t" style="left:42.7px;top:3px;letter-spacing:-0.206px">Incluir</div></div>
<div class="btn" style="left:297px;top:468px;width:98px;height:20px"><svg style="left:22px;top:1px" width="16" height="16" viewBox="0 0 16 16"><rect x="2.5" y="6.5" width="10" height="8" fill="#eef2fb" stroke="#7e8fb5"/><rect x="3.5" y="7.5" width="8" height="2" fill="#c6d3ee"/><path d="M4 5.5 Q6 1.5 10 1.8 Q14.5 2 15 4.5 Q15 7 12 7.2 L8.5 7 L6 8.5 Z" fill="#e9b872" stroke="#b98538" stroke-width=".8"/><path d="M3 7 L6.5 4" stroke="#c9c9c9" stroke-width="1.6"/></svg><div class="t" style="left:40.6px;top:3px;letter-spacing:-0.071px">Alterar</div></div>
<div class="btn" style="left:398px;top:468px;width:98px;height:20px"><svg style="left:16px;top:1px" width="16" height="16" viewBox="0 0 16 16"><rect x="1.5" y="1.5" width="13" height="12.5" rx="1.2" fill="#f4f8ff" stroke="#2f8ff0" stroke-width="1.4"/><rect x="2.2" y="2.2" width="11.6" height="2" fill="#3fa0ff"/><circle cx="7.5" cy="8.5" r="3" fill="#dfeeff" stroke="#7d8aa0" stroke-width="1.2"/><path d="M9.8 10.8 L13 14" stroke="#e89a3a" stroke-width="2.2" stroke-linecap="round"/></svg><div class="t" style="left:33.5px;top:3px;letter-spacing:-0.198px">Consultar</div></div>
<div class="btn" style="left:499px;top:468px;width:98px;height:20px"><svg style="left:23px;top:1px" width="16" height="16" viewBox="0 0 16 16"><rect x="2" y="6.5" width="12" height="3.4" fill="#2a6fe0" stroke="#1550b0" stroke-width=".8"/></svg><div class="t" style="left:41.5px;top:3px;letter-spacing:-0.401px">Excluir</div></div>
<div class="btn" style="left:600px;top:468px;width:98px;height:20px"><svg style="left:6.5px;top:1px" width="16" height="16" viewBox="0 0 16 16"><path d="M2.500 2.200 q1 -1.400 2 0 q1 -1.400 2 0 q1 -1.400 2 0 q1 -1.400 2 0 q1 -1.200 1.800 0 l1.200 1.600 V15 H2.500 Z" fill="#fdfdfd" stroke="#b4b4b4" stroke-width=".7"/><path d="M3.500 5.500 h9 M3.500 7.300 h9 M3.500 9.100 h9 M3.500 10.900 h9 M3.500 12.700 h9" stroke="#c4d6e8" stroke-width=".8"/><path d="M2.500 15.200 H13.700 V4.500" stroke="#6e6e6e" stroke-width=".9" fill="none"/></svg><div class="t" style="left:25.8px;top:3px;letter-spacing:-0.201px">Observações</div></div>
<div class="btn" style="left:196px;top:491px;width:98px;height:20px"><svg style="left:11px;top:1px" width="16" height="16" viewBox="0 0 16 16"><path d="M1 7.200 L9 3.500 L15 6 L7 10 Z" fill="#6e6e6e"/><path d="M3 7.300 L5.500 6.200 L7 7 L8.800 6 L10.300 6.800 L12 5.800" stroke="#8e8e8e" stroke-width="1" fill="none"/><path d="M1 7.200 L7 10 V15.200 L1 12.200 Z" fill="#f07a48"/><path d="M7 10 L15 6 V11 L7 15.200 Z" fill="#e0552a"/><path d="M11 1.500 h2.600 V7 L11 8.200 Z" fill="#e04a30"/><path d="M11 1.500 h2.600 V3 H11 Z" fill="#f08a70"/><path d="M9.500 10.500 l3 -1.500 v2.500 l-3 1.500 z" fill="#5a3a30"/><path d="M1 12.200 L7 15.200 L15 11" stroke="#b03a18" stroke-width=".6" fill="none"/></svg><div class="t" style="left:29.3px;top:3px;letter-spacing:-0.290px">Man.Consol</div></div>
<div class="btn" style="left:297px;top:491px;width:98px;height:20px"><svg style="left:7.5px;top:1px" width="16" height="16" viewBox="0 0 16 16"><path d="M3 1.5 h7.5 l3 3 v10 h-10.500 z" fill="#fbfdff" stroke="#7f8fae"/><path d="M10.5 1.500 v3 h3" fill="#dfe6f3" stroke="#7f8fae" stroke-width=".8"/><path d="M5 8.500 L7.300 11 L11.500 6" stroke="#28a428" stroke-width="2" fill="none"/></svg><div class="t" style="left:26.7px;top:3px;letter-spacing:-0.317px">Gerar docum</div></div>
<div class="btn" style="left:398px;top:491px;width:98px;height:20px"><svg style="left:4.5px;top:1px" width="16" height="16" viewBox="0 0 16 16"><path d="M6.5 1.2 L10.1 3 L6.5 4.8 L2.9 3 Z" fill="#6fb0ff"/><path d="M2.9 3 L6.5 4.8 V8.4 L2.9 6.6 Z" fill="#2a78e8"/><path d="M10.1 3 L6.5 4.8 V8.4 L10.1 6.6 Z" fill="#0f50c8"/><path d="M6.5 1.2 L10.1 3 V6.6 L6.5 8.4 L2.9 6.6 V3 Z" fill="none" stroke="#0a3fa0" stroke-width=".5"/><path d="M4 7.000000000000001 L7.6 8.8 L4 10.600000000000001 L0.3999999999999999 8.8 Z" fill="#6fb0ff"/><path d="M0.3999999999999999 8.8 L4 10.600000000000001 V14.400000000000002 L0.3999999999999999 12.600000000000001 Z" fill="#2a78e8"/><path d="M7.6 8.8 L4 10.600000000000001 V14.400000000000002 L7.6 12.600000000000001 Z" fill="#0f50c8"/><path d="M4 7.000000000000001 L7.6 8.8 V12.600000000000001 L4 14.400000000000002 L0.3999999999999999 12.600000000000001 V8.8 Z" fill="none" stroke="#0a3fa0" stroke-width=".5"/><path d="M10.5 5.8 L13.9 7.5 L10.5 9.2 L7.1 7.5 Z" fill="#7fbaff"/><path d="M7.1 7.5 L10.5 9.2 V12.799999999999999 L7.1 11.1 Z" fill="#3a84ec"/><path d="M13.9 7.5 L10.5 9.2 V12.799999999999999 L13.9 11.1 Z" fill="#1558cc"/><path d="M10.5 5.8 L13.9 7.5 V11.1 L10.5 12.799999999999999 L7.1 11.1 V7.5 Z" fill="none" stroke="#0a3fa0" stroke-width=".5"/><path d="M8.500 11.200 h3.500 v-2 l3.800 3.300 l-3.800 3.300 v-2 h-3.500 z" fill="#3fd03f" stroke="#1a8a1a" stroke-width=".7"/></svg><div class="t" style="left:22.7px;top:3px;letter-spacing:-0.304px">Gerar remessa</div></div>
<div class="btn" style="left:499px;top:491px;width:85px;height:20px"><svg style="left:19px;top:1px" width="16" height="16" viewBox="0 0 16 16"><defs><linearGradient id="prg" x1="0" y1="0" x2="1" y2="1"><stop offset="0" stop-color="#fafafa"/><stop offset="1" stop-color="#aeaeae"/></linearGradient></defs><path d="M1.600 1.600 h8.200 l3 3 v9.800 h-11.200 z" fill="#fdfdff" stroke="#6f84b8" stroke-width="1.200"/><path d="M9.800 1.600 v3 h3" fill="#c8d4ee" stroke="#6f84b8" stroke-width=".8"/><path d="M3 6 h5 v7 h-5 z" fill="#dfe4f2" opacity=".8"/><path d="M7 6.200 L11.500 5.200 L13.500 8.500 L6.500 10 Z" fill="#c4e2f8" stroke="#9ab8d4" stroke-width=".5"/><path d="M4.800 10 L13.500 8 Q15.600 8.200 15.600 10 V12.500 L8 15.300 Q5 15.300 4.800 13 Z" fill="url(#prg)" stroke="#9a9a9a" stroke-width=".5"/><path d="M6 13.600 L8.500 14.600" stroke="#fff" stroke-width="1.200"/><circle cx="14" cy="10.200" r=".7" fill="#5ad04a"/></svg><div class="t" style="left:37.6px;top:3px;letter-spacing:-0.518px">Emitir</div></div>
<div class="btn" style="left:600px;top:491px;width:85px;height:20px"><svg style="left:6px;top:1px" width="16" height="16" viewBox="0 0 16 16"><defs><linearGradient id="pg" x1="0" y1="0" x2="1" y2="1"><stop offset="0" stop-color="#a6f08e"/><stop offset=".55" stop-color="#46c432"/><stop offset="1" stop-color="#1e8a18"/></linearGradient></defs><path d="M3 1.300 L14.300 8 L3 14.800 Z" fill="url(#pg)" stroke="#2a9420" stroke-width="1.100" stroke-linejoin="round"/></svg><div class="t" style="left:25.3px;top:3px;letter-spacing:-0.296px">Programar</div></div>
<div class="btn" style="left:196px;top:514px;width:98px;height:20px"><svg style="left:8px;top:1px" width="16" height="16" viewBox="0 0 16 16"><path d="M3.300 2.500 h7 l2.500 2.500 v9.500 h-9.500 z" fill="#fbfcff" stroke="#7a88a8"/><path d="M13.300 5.500 V15 H4" stroke="#9aa0b0" stroke-width=".8" fill="none" opacity=".7"/><circle cx="6.800" cy="2.800" r="2.300" fill="#e42a2a" stroke="#a01010" stroke-width=".6"/><circle cx="6.200" cy="2.200" r=".7" fill="#ff9a8a"/><text x="10" y="15.300" font-size="11.500" font-weight="bold" fill="#1fa01f" stroke="#157a15" stroke-width=".3" text-anchor="middle" font-family="Liberation Sans, sans-serif">$</text></svg><div class="t" style="left:27.4px;top:3px;letter-spacing:-0.256px">Req.Compra</div></div>
<div class="btn" style="left:297px;top:514px;width:98px;height:20px"><svg style="left:8.5px;top:1px" width="16" height="16" viewBox="0 0 16 16"><circle cx="8" cy="7.100" r="4.500" fill="none" stroke="#bfe6b8" stroke-width="3.600" opacity=".6"/><circle cx="8" cy="7.100" r="2.200" fill="#c8c8c8" opacity=".7"/><path d="M9.18 1.30 A6.8 6.8 0 0 1 14.80 7.76 L16.39 7.71 L12.21 11.06 L10.20 7.92 L11.60 7.87 A3.6 3.6 0 0 0 8.63 4.45 Z M13.21 12.37 A6.8 6.8 0 0 1 4.81 14.00 L4.06 15.42 L3.25 10.12 L6.97 9.94 L6.31 11.18 A3.6 3.6 0 0 0 10.76 10.31 Z M1.61 10.33 A6.8 6.8 0 0 1 4.40 2.23 L3.55 0.88 L8.54 2.83 L6.83 6.13 L6.09 4.95 A3.6 3.6 0 0 0 4.62 9.23 Z" fill="#3fc03f" stroke="#1f8a1f" stroke-width=".7" transform="translate(.8 -.1) scale(.9)"/></svg><div class="t" style="left:28.9px;top:3px;letter-spacing:-0.209px">Atu.Posição</div></div>
<div class="btn" style="left:398px;top:514px;width:98px;height:20px"><svg style="left:1.5px;top:1px" width="16" height="16" viewBox="0 0 16 16"><path d="M6.500 1.500 h6 l2 2 v9.500 h-8 z" fill="#c9b8e8" stroke="#7a62b0" stroke-width=".9"/><path d="M1.500 4.500 h6.500 l2.500 2.500 v8 h-9 z" fill="#f2f5fc" stroke="#7f8fae" stroke-width=".9"/><rect x="3" y="9" width="6" height="4.500" fill="#c8d4ee"/><path d="M3 7.500 h4" stroke="#aab6d4" stroke-width=".8"/></svg><div class="t" style="left:20.6px;top:3px;letter-spacing:-0.107px">Compar.Insum.</div></div>
<div class="btn" style="left:499px;top:514px;width:98px;height:20px"><svg style="left:7.5px;top:1px" width="16" height="16" viewBox="0 0 16 16"><path d="M1.500 3.200 L11.800 1.500 L14 11.800 L4 14.200 Z" fill="#fbf4b0" stroke="#e2d684" stroke-width=".8"/><path d="M3.500 5.700 L11 4.500 M4 7.700 L11.500 6.500 M4.500 9.700 L12 8.500 M5 11.600 L9 11" stroke="#e6da8c" stroke-width=".7"/><path d="M6 11.300 L7.300 8.600 L12.300 3.600 L13.900 5.200 L8.900 10.200 Z" fill="#4cbc4c" stroke="#2a8a2a" stroke-width=".5"/><path d="M11.900 4 L12.900 3 L14.500 4.600 L13.500 5.600 Z" fill="#e84040"/><path d="M6 11.300 L6.600 9.900 L7.500 10.800 Z" fill="#555"/></svg><div class="t" style="left:25.4px;top:3px;letter-spacing:0.008px">Data entrega</div></div>
<div class="btn" style="left:600px;top:514px;width:98px;height:20px"><svg style="left:4.5px;top:1px" width="16" height="16" viewBox="0 0 16 16"><path d="M8 0.8500000000000001 L11.5 2.6 L8 4.35 L4.5 2.6 Z" fill="#7fbaff"/><path d="M4.5 2.6 L8 4.35 V7.85 L4.5 6.1 Z" fill="#2a78e8"/><path d="M11.5 2.6 L8 4.35 V7.85 L11.5 6.1 Z" fill="#0f50c8"/><path d="M8 0.8500000000000001 L11.5 2.6 V6.1 L8 7.85 L4.5 6.1 V2.6 Z" fill="none" stroke="#0a3fa0" stroke-width=".5"/><path d="M4.3 6.949999999999999 L7.8 8.7 L4.3 10.45 L0.7999999999999998 8.7 Z" fill="#fff08a"/><path d="M0.7999999999999998 8.7 L4.3 10.45 V14.049999999999999 L0.7999999999999998 12.299999999999999 Z" fill="#f4c820"/><path d="M7.8 8.7 L4.3 10.45 V14.049999999999999 L7.8 12.299999999999999 Z" fill="#d09a08"/><path d="M4.3 6.949999999999999 L7.8 8.7 V12.299999999999999 L4.3 14.049999999999999 L0.7999999999999998 12.299999999999999 V8.7 Z" fill="none" stroke="#9a7006" stroke-width=".5"/><path d="M11.5 6.949999999999999 L15.0 8.7 L11.5 10.45 L8.0 8.7 Z" fill="#9aec8a"/><path d="M8.0 8.7 L11.5 10.45 V14.049999999999999 L8.0 12.299999999999999 Z" fill="#3fc03f"/><path d="M15.0 8.7 L11.5 10.45 V14.049999999999999 L15.0 12.299999999999999 Z" fill="#1f9a1f"/><path d="M11.5 6.949999999999999 L15.0 8.7 V12.299999999999999 L11.5 14.049999999999999 L8.0 12.299999999999999 V8.7 Z" fill="none" stroke="#157015" stroke-width=".5"/></svg><div class="t" style="left:23.6px;top:3px;letter-spacing:-0.395px">OPs p/ insumo</div></div>
<div class="btn" style="left:196px;top:537px;width:98px;height:20px"><svg style="left:2px;top:1px" width="16" height="16" viewBox="0 0 16 16"><path d="M2.500 1.500 h8 l3 3 v10.500 h-11 z" fill="#f6f9ff" stroke="#7f8fb5"/><path d="M10.500 1.500 v3 h3" fill="#dde5f5" stroke="#7f8fb5" stroke-width=".8"/><rect x="4" y="7" width="8" height="6.500" fill="#c3d0ee"/><path d="M4 8.200 h8" stroke="#f6f9ff" stroke-width=".8"/></svg><div class="t" style="left:21.3px;top:3px;letter-spacing:-0.050px">Relat./Gráficos</div></div>
<div class="btn" style="left:297px;top:537px;width:98px;height:20px"><svg style="left:6px;top:1px" width="16" height="16" viewBox="0 0 16 16"><path d="M8 1 L14.500 3.500 V11.500 L8 15 L1.500 11.500 V3.500 Z" fill="#f0b020" stroke="#9a6a08" stroke-width=".9"/><path d="M8 1 L14.500 3.500 L8 6.300 L1.500 3.500 Z" fill="#f8d050" stroke="#9a6a08" stroke-width=".6"/><path d="M8 6.300 V15 M1.500 7.500 L8 10.500 L14.500 7.500 M4.700 2.200 L11.300 5 M11.300 2.200 L4.700 5" stroke="#7a5206" stroke-width=".9" fill="none"/></svg><div class="t" style="left:24.6px;top:3px;letter-spacing:-0.071px">Ger.Lot.Prod.</div></div>
<div class="btn" style="left:398px;top:537px;width:98px;height:20px"><svg style="left:0.5px;top:1px" width="16" height="16" viewBox="0 0 16 16"><path d="M1.500 3.200 L11.800 1.500 L14 11.800 L4 14.200 Z" fill="#fbf4b0" stroke="#e2d684" stroke-width=".8"/><path d="M3.500 5.700 L11 4.500 M4 7.700 L11.500 6.500 M4.500 9.700 L12 8.500 M5 11.600 L9 11" stroke="#e6da8c" stroke-width=".7"/><path d="M6 11.300 L7.300 8.600 L12.300 3.600 L13.900 5.200 L8.900 10.200 Z" fill="#4cbc4c" stroke="#2a8a2a" stroke-width=".5"/><path d="M11.900 4 L12.900 3 L14.500 4.600 L13.500 5.600 Z" fill="#e84040"/><path d="M6 11.300 L6.600 9.900 L7.500 10.800 Z" fill="#555"/></svg><div class="t" style="left:18.6px;top:3px;letter-spacing:-0.221px">Grupo produção</div></div>
<div class="btn" style="left:499px;top:537px;width:98px;height:20px"><svg style="left:6.5px;top:1px" width="16" height="16" viewBox="0 0 16 16"><path d="M1.500 3.200 L11.800 1.500 L14 11.800 L4 14.200 Z" fill="#fbf4b0" stroke="#e2d684" stroke-width=".8"/><path d="M3.500 5.700 L11 4.500 M4 7.700 L11.500 6.500 M4.500 9.700 L12 8.500 M5 11.600 L9 11" stroke="#e6da8c" stroke-width=".7"/><path d="M6 11.300 L7.300 8.600 L12.300 3.600 L13.900 5.200 L8.900 10.200 Z" fill="#4cbc4c" stroke="#2a8a2a" stroke-width=".5"/><path d="M11.900 4 L12.900 3 L14.500 4.600 L13.500 5.600 Z" fill="#e84040"/><path d="M6 11.300 L6.600 9.900 L7.500 10.800 Z" fill="#555"/></svg><div class="t" style="left:24.6px;top:3px;letter-spacing:-0.362px">Complemento</div></div>
<div class="btn" style="left:969px;top:468px;width:85px;height:20px"><svg style="left:1.5px;top:1px" width="16" height="16" viewBox="0 0 16 16"><circle cx="8" cy="7.100" r="4.500" fill="none" stroke="#bfe6b8" stroke-width="3.600" opacity=".6"/><circle cx="8" cy="7.100" r="2.200" fill="#c8c8c8" opacity=".7"/><path d="M9.18 1.30 A6.8 6.8 0 0 1 14.80 7.76 L16.39 7.71 L12.21 11.06 L10.20 7.92 L11.60 7.87 A3.6 3.6 0 0 0 8.63 4.45 Z M13.21 12.37 A6.8 6.8 0 0 1 4.81 14.00 L4.06 15.42 L3.25 10.12 L6.97 9.94 L6.31 11.18 A3.6 3.6 0 0 0 10.76 10.31 Z M1.61 10.33 A6.8 6.8 0 0 1 4.40 2.23 L3.55 0.88 L8.54 2.83 L6.83 6.13 L6.09 4.95 A3.6 3.6 0 0 0 4.62 9.23 Z" fill="#3fc03f" stroke="#1f8a1f" stroke-width=".7" transform="translate(.8 -.1) scale(.9)"/></svg><div class="t" style="left:21.4px;top:3px;letter-spacing:-0.125px">F5-Atuali<u>z</u>ar</div></div>
<div class="btn" style="left:1070px;top:468px;width:85px;height:20px"><svg style="left:9px;top:1px" width="16" height="16" viewBox="0 0 16 16"><ellipse cx="7.500" cy="3.200" rx="6.300" ry="2.300" fill="#f2f3f6" stroke="#70757f" stroke-width=".9"/><path d="M1.300 3.700 L6 9.500 V14.500 L9 13 V9.500 L13.700 3.700 Q7.500 7.200 1.300 3.700 Z" fill="#b4b8c0" stroke="#6a6f7a" stroke-width=".8"/><path d="M8 11 L10.300 13.600 L14.800 7.500" stroke="#2a6fe0" stroke-width="2.200" fill="none"/></svg><div class="t" style="left:27.4px;top:3px;letter-spacing:-0.145px">F9-Filtros</div></div>
<div class="btn" style="left:969px;top:491px;width:85px;height:20px"><svg style="left:14.5px;top:1px" width="16" height="16" viewBox="0 0 16 16"><rect x="1.500" y="1.500" width="12.500" height="13" rx="1.500" fill="#f6f9ff" stroke="#2f8ff0" stroke-width="1.500"/><rect x="2.300" y="2.300" width="11" height="2.200" fill="#3fa0ff"/><path d="M3 6 h5 v8 h-5 z" fill="#f4b8a8"/><path d="M3 8 h5 M3 10 h5 M3 12 h5 M5.500 6 v8" stroke="#fff" stroke-width=".6"/><path d="M7 6.500 Q9 3.300 12.500 3.800 Q16 4.200 15.800 6.800 Q15.300 9.200 12.500 9 L10 8.800 L8 10.200 Z" fill="#e9b872" stroke="#b07a30" stroke-width=".7"/></svg><div class="t" style="left:33.3px;top:3px;letter-spacing:0.079px">Layout</div></div>
<div class="btn" style="left:1070px;top:491px;width:85px;height:20px"><svg style="left:6px;top:1px" width="16" height="16" viewBox="0 0 16 16"><path d="M8 .8 l1.100 .1 l.5 1.900 l1.300 .6 l1.700 -1 l1.500 1.500 l-1 1.700 l.6 1.300 l1.900 .5 v2.200 l-1.900 .5 l-.6 1.300 l1 1.700 l-1.500 1.500 l-1.700 -1 l-1.300 .6 l-.5 1.900 h-2.200 l-.5 -1.900 l-1.300 -.6 l-1.700 1 l-1.500 -1.500 l1 -1.700 l-.6 -1.300 l-1.900 -.5 v-2.200 l1.900 -.5 l.6 -1.300 l-1 -1.700 l1.500 -1.500 l1.700 1 l1.300 -.6 l.5 -1.900 z" transform="translate(.8 .3) scale(.9)" fill="#c6caf2" stroke="#6f78c4" stroke-width=".9"/><circle cx="8" cy="8" r="2.600" fill="#e4e4ea" stroke="#6f78c4" stroke-width=".9"/></svg><div class="t" style="left:24.6px;top:3px;letter-spacing:-0.146px">Configurar</div></div>
<div class="btn" style="left:1070px;top:514px;width:98px;height:42px"><svg style="left:29.5px;top:11px" width="16" height="16" viewBox="0 0 16 16"><path d="M7.500 2 L14 1 V15 L7.500 14 Z" fill="#9a8fd0" stroke="#5a4fa0" stroke-width=".8"/><path d="M7.500 2 L11 3 V15 L7.500 14 Z" fill="#c8c0ea"/><rect x="11" y="3" width="3.500" height="12" fill="#7a6fc0"/><path d="M1 6 h4 v-2.300 l4 3.800 l-4 3.800 v-2.300 h-4 z" fill="#3cc43c" stroke="#1c7a1c" stroke-width=".7"/></svg><div class="t" style="left:49.0px;top:14px;letter-spacing:-0.641px"><u>S</u>air</div></div>
<div class="dd" style="left:586px;top:491px"></div>
<div class="dd" style="left:687px;top:491px"></div>
<div class="dd" style="left:1056px;top:468px"></div>
<div class="dd" style="left:1157px;top:468px"></div>
<div class="dd" style="left:1056px;top:491px"></div>
<div class="dd" style="left:1157px;top:491px"></div>
<div style="left:703px;top:467px;width:1px;height:88px;background:#a0a0a0"></div>
<svg style="left:707px;top:466px;overflow:visible" width="75" height="40" viewBox="0 0 75 40"><defs><radialGradient id="rg" cx=".5" cy=".45" r=".6"><stop offset="0" stop-color="#f58a5e"/><stop offset=".6" stop-color="#ec4a26"/><stop offset="1" stop-color="#d42a12"/></radialGradient></defs><path d="M4.800 8.600 h8 l2.800 2.800 v8 l-2.800 2.800 h-8 l-2.800 -2.800 v-8 z" fill="url(#rg)" stroke="#b05060" stroke-width=".7" transform="translate(0 -.3)"/><path d="M5.800 12 l6 6 m0 -6 l-6 6" stroke="#fff" stroke-width="2.400" stroke-linecap="round"/><g font-family="DejaVu Sans Mono, Liberation Mono, monospace" font-weight="bold" font-size="11.600" fill="#333" stroke="#333" stroke-width=".25" text-anchor="middle"><text x="42" y="12" textLength="44" lengthAdjust="spacingAndGlyphs">Imagem</text><text x="38.500" y="25.600" textLength="19.500" lengthAdjust="spacingAndGlyphs">não</text><text x="35.300" y="35.800" textLength="67" lengthAdjust="spacingAndGlyphs">encontrada!</text></g></svg>
<svg style="left:808.3px;top:466px;overflow:visible" width="75" height="40" viewBox="0 0 75 40"><defs><radialGradient id="rg" cx=".5" cy=".45" r=".6"><stop offset="0" stop-color="#f58a5e"/><stop offset=".6" stop-color="#ec4a26"/><stop offset="1" stop-color="#d42a12"/></radialGradient></defs><path d="M4.800 8.600 h8 l2.800 2.800 v8 l-2.800 2.800 h-8 l-2.800 -2.800 v-8 z" fill="url(#rg)" stroke="#b05060" stroke-width=".7" transform="translate(0 -.3)"/><path d="M5.800 12 l6 6 m0 -6 l-6 6" stroke="#fff" stroke-width="2.400" stroke-linecap="round"/><g font-family="DejaVu Sans Mono, Liberation Mono, monospace" font-weight="bold" font-size="11.600" fill="#333" stroke="#333" stroke-width=".25" text-anchor="middle"><text x="42" y="12" textLength="44" lengthAdjust="spacingAndGlyphs">Imagem</text><text x="38.500" y="25.600" textLength="19.500" lengthAdjust="spacingAndGlyphs">não</text><text x="35.300" y="35.800" textLength="67" lengthAdjust="spacingAndGlyphs">encontrada!</text></g></svg>
</div>
<svg class="abs" style="position:absolute;left:0;top:0;will-change:transform" width="1204" height="721" viewBox="0 0 1204 721">
<defs><filter id="sh" x="-30%" y="-30%" width="170%" height="170%"><feGaussianBlur in="SourceAlpha" stdDeviation="1.6"/><feOffset dx="1.8" dy="1.8"/><feComponentTransfer><feFuncA type="linear" slope=".6"/></feComponentTransfer><feMerge><feMergeNode/><feMergeNode in="SourceGraphic"/></feMerge></filter></defs>
<g stroke="#1c3c9e" stroke-width="1.05" fill="none">
<path d="M162.3 431.4 L208.8 465.6"/>
<path d="M162.8 389.5 L350.5 467.8"/>
<path d="M162.8 348.4 L452.2 466.6"/>
<path d="M163.4 307.4 L552.5 468.4"/>
<path d="M163.4 267.1 L646.7 467.9"/>
<path d="M163.9 471.9 L200.8 496.6"/>
<path d="M164.8 510.0 L197.8 518.4"/>
<path d="M231.0 579.4 L313.8 509.4"/>
<path d="M229.9 619.4 L315.6 535.4"/>
<path d="M231.0 661.2 L347.9 559.4"/>
<path d="M350.9 578.5 L408 513"/>
<path d="M347.8 657.9 L411 538"/>
<path d="M514.0 658.0 L471.4 560"/>
<path d="M691.6 579.8 L596 510.2"/>
<path d="M694.0 619.3 L592.2 531.9"/>
<path d="M694.5 658.7 L581.3 560.3"/>
<path d="M886.8 581.6 L688.2 508.4"/>
<path d="M887.5 621.6 L697 531"/>
</g>
<g filter="url(#sh)">
<rect x="143.0" y="251.0" width="24" height="24" rx="9.500" fill="#002e9e"/>
<rect x="143.0" y="290.7" width="24" height="24" rx="9.500" fill="#002e9e"/>
<rect x="142.4" y="332.3" width="24" height="24" rx="9.500" fill="#002e9e"/>
<rect x="142.4" y="373.0" width="24" height="24" rx="9.500" fill="#002e9e"/>
<rect x="142.4" y="413.0" width="24" height="24" rx="9.500" fill="#002e9e"/>
<rect x="142.9" y="454.2" width="24" height="24" rx="9.500" fill="#002e9e"/>
<rect x="143.9" y="495.0" width="24" height="24" rx="9.500" fill="#002e9e"/>
<rect x="212.2" y="574.4" width="24" height="24" rx="9.500" fill="#002e9e"/>
<rect x="211.4" y="614.3" width="24" height="24" rx="9.500" fill="#002e9e"/>
<rect x="211.4" y="654.8" width="24" height="24" rx="9.500" fill="#002e9e"/>
<rect x="333.0" y="574.4" width="24" height="24" rx="9.500" fill="#002e9e"/>
<rect x="331.6" y="654.8" width="24" height="24" rx="9.500" fill="#002e9e"/>
<rect x="505.1" y="655.0" width="24" height="24" rx="9.500" fill="#002e9e"/>
<rect x="688.0" y="574.5" width="24" height="24" rx="9.500" fill="#002e9e"/>
<rect x="688.8" y="614.4" width="24" height="24" rx="9.500" fill="#002e9e"/>
<rect x="689.7" y="655.0" width="24" height="24" rx="9.500" fill="#002e9e"/>
<rect x="882.9" y="574.3" width="24" height="24" rx="9.500" fill="#002e9e"/>
<rect x="882.9" y="614.0" width="24" height="24" rx="9.500" fill="#002e9e"/>
</g>
<g font-family="Liberation Sans, sans-serif" font-weight="bold" font-size="13" fill="#fff" text-anchor="middle">
<text x="155.0" y="267.7" textLength="6.5" lengthAdjust="spacingAndGlyphs">5</text>
<text x="155.0" y="307.4" textLength="6.5" lengthAdjust="spacingAndGlyphs">4</text>
<text x="154.4" y="349.0" textLength="6.5" lengthAdjust="spacingAndGlyphs">3</text>
<text x="154.4" y="389.7" textLength="6.5" lengthAdjust="spacingAndGlyphs">2</text>
<text x="154.4" y="429.7" textLength="6.5" lengthAdjust="spacingAndGlyphs">1</text>
<text x="154.9" y="470.9" textLength="6.5" lengthAdjust="spacingAndGlyphs">6</text>
<text x="155.9" y="511.7" textLength="12.8" lengthAdjust="spacingAndGlyphs">11</text>
<text x="224.2" y="591.1" textLength="6.5" lengthAdjust="spacingAndGlyphs">7</text>
<text x="223.4" y="631.0" textLength="12.8" lengthAdjust="spacingAndGlyphs">12</text>
<text x="223.4" y="671.5" textLength="12.8" lengthAdjust="spacingAndGlyphs">13</text>
<text x="345.0" y="591.1" textLength="6.5" lengthAdjust="spacingAndGlyphs">8</text>
<text x="343.6" y="671.5" textLength="12.8" lengthAdjust="spacingAndGlyphs">14</text>
<text x="517.1" y="671.7" textLength="12.8" lengthAdjust="spacingAndGlyphs">18</text>
<text x="700.0" y="591.2" textLength="6.5" lengthAdjust="spacingAndGlyphs">9</text>
<text x="700.8" y="631.1" textLength="12.8" lengthAdjust="spacingAndGlyphs">15</text>
<text x="701.7" y="671.7" textLength="12.8" lengthAdjust="spacingAndGlyphs">17</text>
<text x="894.9" y="591.0" textLength="12.8" lengthAdjust="spacingAndGlyphs">10</text>
<text x="894.9" y="630.7" textLength="12.8" lengthAdjust="spacingAndGlyphs">16</text>
</g>
<g font-family="Liberation Sans, sans-serif" font-weight="bold" font-size="15" fill="#002e9e">
<text x="48" y="269.0" textLength="89.7" lengthAdjust="spacingAndGlyphs">Observações</text>
<text x="92.9" y="309.1" textLength="44.8" lengthAdjust="spacingAndGlyphs">Excluir</text>
<text x="70.7" y="350.3" textLength="66.1" lengthAdjust="spacingAndGlyphs">Consultar</text>
<text x="88.2" y="391.0" textLength="48.6" lengthAdjust="spacingAndGlyphs">Alterar</text>
<text x="94" y="431.0" textLength="42.8" lengthAdjust="spacingAndGlyphs">Incluir</text>
<text x="12.5" y="471.9" textLength="124.8" lengthAdjust="spacingAndGlyphs">Man. Consolidada</text>
<text x="52" y="513.0" textLength="86.0" lengthAdjust="spacingAndGlyphs">Req.Compra</text>
<text x="110.5" y="591.5" textLength="95.4" lengthAdjust="spacingAndGlyphs">Gerar docum.</text>
<text x="124.4" y="631.8" textLength="80.8" lengthAdjust="spacingAndGlyphs">Atu.Posição</text>
<text x="111.7" y="672.5" textLength="93.0" lengthAdjust="spacingAndGlyphs">Ger.Lot.Prod.</text>
<text x="293.9" y="618.9" textLength="102.6" lengthAdjust="spacingAndGlyphs">Gerar remessa</text>
<text x="293.1" y="699.9" textLength="100.9" lengthAdjust="spacingAndGlyphs">Compar.Insum</text>
<text x="460.4" y="699.9" textLength="113.6" lengthAdjust="spacingAndGlyphs">Grupo produção</text>
<text x="717.4" y="592.2" textLength="40.9" lengthAdjust="spacingAndGlyphs">Emitir</text>
<text x="718.9" y="631.7" textLength="90.3" lengthAdjust="spacingAndGlyphs">Data entrega</text>
<text x="719.5" y="672.3" textLength="100.2" lengthAdjust="spacingAndGlyphs">Complemento</text>
<text x="912.7" y="592.2" textLength="72.9" lengthAdjust="spacingAndGlyphs">Programar</text>
<text x="912.7" y="631.7" textLength="103.1" lengthAdjust="spacingAndGlyphs">OPs p/ insumo</text>
</g>
</svg>
</body></html>
